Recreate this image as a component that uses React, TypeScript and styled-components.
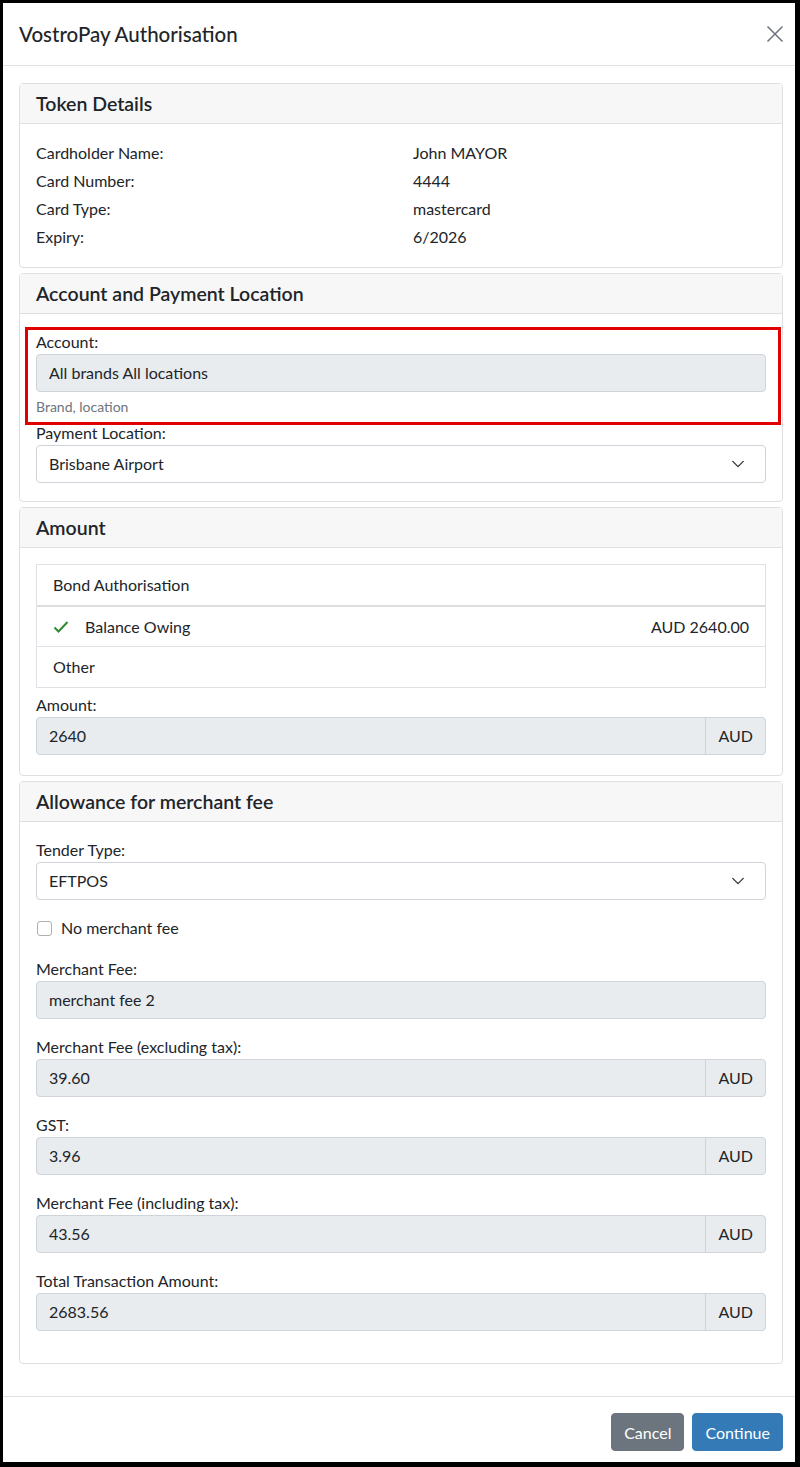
import React from 'react';
import styled, { createGlobalStyle } from 'styled-components';

const GlobalStyle = createGlobalStyle`
    * { box-sizing: border-box; }
    html, body {
        margin: 0;
        padding: 0;
        background: #000;
    }
    body {
        font-family: Lato, "Noto Sans", sans-serif;
        font-size: 16px;
        line-height: 1.5;
        color: #212529;
    }
`

const Modal = styled.div`
    background: #fff;
    margin: 3px 5px 5px 3px;
    width: 792px;
    height: 1459px;
    display: flex;
    flex-direction: column;
`

const ModalHeader = styled.div`
    display: flex;
    align-items: center;
    justify-content: space-between;
    padding: 16px 8px 16px 16px;
    border-bottom: 1px solid #dee2e6;
`

const ModalTitle = styled.h5`
    margin: 0;
    font-size: 20.5px;
    font-weight: 500;
    line-height: 30px;
`

const CloseButton = styled.button`
    border: 0;
    background: transparent;
    padding: 0;
    width: 24px;
    height: 24px;
    display: flex;
    align-items: center;
    justify-content: center;
    cursor: pointer;
`

const ModalBody = styled.div`
    flex: 1;
    padding: 17px 12px 16px 16px;
    display: flex;
    flex-direction: column;
    gap: 5px;
`

const Card = styled.div<{ $last?: boolean }>`
    border: 1px solid #dfdfdf;
    border-radius: 4px;
    margin-bottom: ${(p) => (p.$last ? '16px' : '0')};
`

const CardHeader = styled.div`
    background: #f7f7f7;
    border-bottom: 1px solid #dfdfdf;
    padding: 0 16px;
    height: 40px;
    display: flex;
    align-items: center;
    font-size: 19.5px;
    font-weight: 600;
`

const CardBody = styled.div<{ $pb?: number }>`
    padding: 16px 16px ${(p) => (p.$pb ?? 16)}px;
`

const DetailGrid = styled.div`
    display: grid;
    grid-template-columns: 1fr 1fr;
    column-gap: 24px;
    line-height: 28px;
    margin-top: -1px;
`

const Highlight = styled.div`
    border: 3px solid #e00000;
    margin: -3px -15px -4px -11px;
    padding: 0 12px 5px 8px;
`

const Label = styled.div`
    line-height: 24px;
`

const FieldGroup = styled.div<{ $mb?: number }>`
    margin-bottom: ${(p) => (p.$mb ?? 0)}px;
`

const InputBox = styled.div<{ $readonly?: boolean }>`
    height: 38px;
    border: 1px solid #ced4da;
    border-radius: 4px;
    background: ${(p) => (p.$readonly ? '#e9ecef' : '#fff')};
    display: flex;
    align-items: center;
    padding: 0 12px;
`

const InputGroup = styled.div`
    display: flex;
    height: 38px;
    border: 1px solid #ced4da;
    border-radius: 4px;
    background: #e9ecef;
`

const GroupText = styled.div<{ $addon?: boolean }>`
    display: flex;
    align-items: center;
    padding: 0 12px;
    flex: ${(p) => (p.$addon ? '0 0 auto' : '1')};
    border-left: ${(p) => (p.$addon ? '1px solid #ced4da' : 'none')};
`

const SelectBox = styled(InputBox)`
    justify-content: space-between;
    padding-right: 20px;
`

const HelpText = styled.div`
    margin-top: 4px;
    font-size: 14px;
    line-height: 21px;
    color: #6c757d;
`

const ListGroup = styled.div`
    border: 1px solid #dee2e6;
    margin-bottom: 5px;
`

const ListItem = styled.div<{ $thick?: boolean }>`
    height: 41px;
    padding: 0 16px;
    display: flex;
    align-items: center;
    border-top: ${(p) => (p.$thick ? '2px solid #dedede' : '1px solid #dee2e6')};
    &:first-child {
        border-top: none;
        height: 40px;
    }
`

const CheckIcon = styled.span`
    width: 16px;
    display: inline-flex;
    margin-right: 16px;
`

const Amount = styled.span`
    margin-left: auto;
`

const CheckRow = styled.label`
    display: flex;
    align-items: center;
    height: 24px;
    margin-bottom: 17px;
`

const CheckBox = styled.span`
    width: 15px;
    height: 15px;
    border: 1px solid #b0b0b0;
    border-radius: 3px;
    margin: 0 9px 0 1px;
    background: #fff;
`

const ModalFooter = styled.div`
    border-top: 1px solid #dee2e6;
    padding: 16px 12px 11px;
    display: flex;
    justify-content: flex-end;
    gap: 8px;
`

const Button = styled.button<{ $variant: 'secondary' | 'primary' }>`
    height: 38px;
    padding: 0 12px;
    border: 1px solid ${(p) => (p.$variant === 'primary' ? '#337ab7' : '#6c757d')};
    background: ${(p) => (p.$variant === 'primary' ? '#337ab7' : '#6c757d')};
    color: #fff;
    border-radius: 4px;
    font-family: inherit;
    font-size: 16px;
`

const Chevron = () => (
    <svg width="14" height="14" viewBox="0 0 16 16" fill="none">
        <path d="M2 5l6 6 6-6" stroke="#343a40" strokeWidth="1.6" strokeLinecap="round" strokeLinejoin="round" />
    </svg>
)

const tokenRows = [
    ['Cardholder Name:', 'John MAYOR'],
    ['Card Number:', '4444'],
    ['Card Type:', 'mastercard'],
    ['Expiry:', '6/2026'],
]

const feeFields = [
    { label: 'Merchant Fee (excluding tax):', value: '39.60' },
    { label: 'GST:', value: '3.96' },
    { label: 'Merchant Fee (including tax):', value: '43.56' },
    { label: 'Total Transaction Amount:', value: '2683.56' },
]

export default function App() {
    return (
        <>
            <GlobalStyle />
            <Modal>
                <ModalHeader>
                    <ModalTitle>VostroPay Authorisation</ModalTitle>
                    <CloseButton aria-label="Close">
                        <svg width="18" height="18" viewBox="0 0 18 18">
                            <path d="M1.5 1.5l15 15M16.5 1.5l-15 15" stroke="#6c757d" strokeWidth="1.5" />
                        </svg>
                    </CloseButton>
                </ModalHeader>

                <ModalBody>
                    <Card>
                        <CardHeader>Token Details</CardHeader>
                        <CardBody>
                            <DetailGrid>
                                {tokenRows.map(([k, v]) => (
                                    <React.Fragment key={k}>
                                        <div>{k}</div>
                                        <div>{v}</div>
                                    </React.Fragment>
                                ))}
                            </DetailGrid>
                        </CardBody>
                    </Card>

                    <Card>
                        <CardHeader>Account and Payment Location</CardHeader>
                        <CardBody $pb={18}>
                            <Highlight>
                                <Label>Account:</Label>
                                <InputBox $readonly>All brands All locations</InputBox>
                                <HelpText>Brand, location</HelpText>
                            </Highlight>
                            <Label>Payment Location:</Label>
                            <SelectBox>
                                <span>Brisbane Airport</span>
                                <Chevron />
                            </SelectBox>
                        </CardBody>
                    </Card>

                    <Card>
                        <CardHeader>Amount</CardHeader>
                        <CardBody $pb={20}>
                            <ListGroup>
                                <ListItem>Bond Authorisation</ListItem>
                                <ListItem $thick>
                                    <CheckIcon>
                                        <svg width="16" height="14" viewBox="0 0 16 14" fill="none">
                                            <path d="M1.5 7.5l4 4L14.5 2" stroke="#2e8b2e" strokeWidth="2" />
                                        </svg>
                                    </CheckIcon>
                                    Balance Owing
                                    <Amount>AUD 2640.00</Amount>
                                </ListItem>
                                <ListItem>Other</ListItem>
                            </ListGroup>
                            <Label>Amount:</Label>
                            <InputGroup>
                                <GroupText>2640</GroupText>
                                <GroupText $addon>AUD</GroupText>
                            </InputGroup>
                        </CardBody>
                    </Card>

                    <Card $last>
                        <CardHeader>Allowance for merchant fee</CardHeader>
                        <CardBody>
                            <FieldGroup $mb={16}>
                                <Label>Tender Type:</Label>
                                <SelectBox>
                                    <span>EFTPOS</span>
                                    <Chevron />
                                </SelectBox>
                            </FieldGroup>
                            <CheckRow>
                                <CheckBox />
                                No merchant fee
                            </CheckRow>
                            <FieldGroup $mb={16}>
                                <Label>Merchant Fee:</Label>
                                <InputBox $readonly>merchant fee 2</InputBox>
                            </FieldGroup>
                            {feeFields.map((f) => (
                                <FieldGroup $mb={16} key={f.label}>
                                    <Label>{f.label}</Label>
                                    <InputGroup>
                                        <GroupText>{f.value}</GroupText>
                                        <GroupText $addon>AUD</GroupText>
                                    </InputGroup>
                                </FieldGroup>
                            ))}
                        </CardBody>
                    </Card>
                </ModalBody>

                <ModalFooter>
                    <Button $variant="secondary">Cancel</Button>
                    <Button $variant="primary">Continue</Button>
                </ModalFooter>
            </Modal>
        </>
    )
}
